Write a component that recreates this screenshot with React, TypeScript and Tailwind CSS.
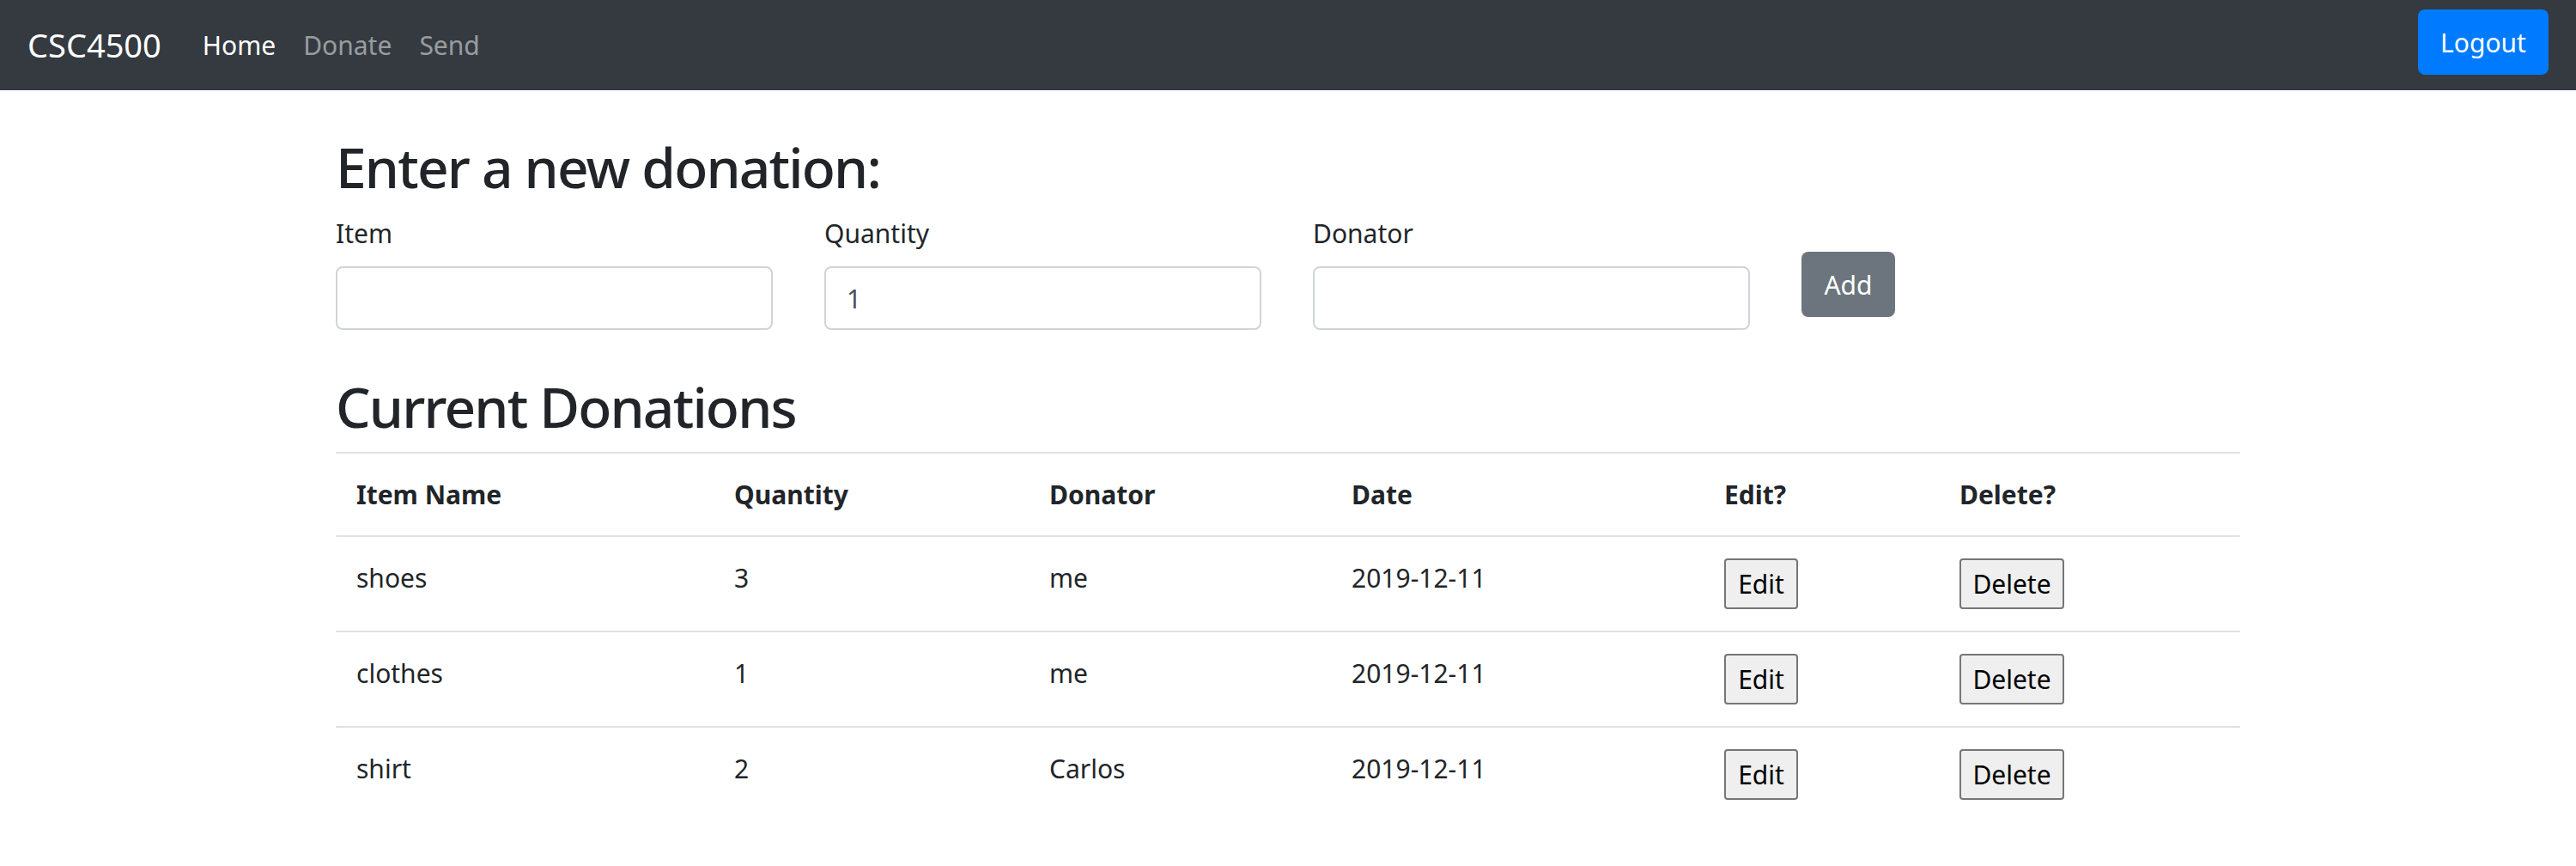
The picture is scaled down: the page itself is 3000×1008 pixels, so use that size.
const donations = [
  { item: "shoes", qty: 3, donator: "me", date: "2019-12-11" },
  { item: "clothes", qty: 1, donator: "me", date: "2019-12-11" },
  { item: "shirt", qty: 2, donator: "Carlos", date: "2019-12-11" },
];

const columns = [
  { label: "Item Name", width: "w-[440px]" },
  { label: "Quantity", width: "w-[367px]" },
  { label: "Donator", width: "w-[352px]" },
  { label: "Date", width: "w-[434px]" },
  { label: "Edit?", width: "w-[274px]" },
  { label: "Delete?", width: "w-[351px]" },
];

const cell = "border-t-2 border-[#dee2e6] px-[24px] pt-[25px] pb-[25px] align-top leading-[45px]";

const Navbar = () => {
  return (
    <nav className="flex h-[105px] justify-between bg-[#343a40] px-[32px]">
      <div className="flex items-center">
        <span className="mr-[32px] text-[38px] leading-[57px] text-white">CSC4500</span>
        <a className="px-[16px] text-[30px] leading-[45px] text-white">Home</a>
        <a className="px-[16px] text-[30px] leading-[45px] text-white/50">Donate</a>
        <a className="px-[16px] text-[30px] leading-[45px] text-white/50">Send</a>
      </div>
      <button className="mt-[11px] h-[76px] w-[152px] rounded-[8px] bg-[#007bff] text-[30px] text-white">
        Logout
      </button>
    </nav>
  );
};

const Field = ({ label, value }: { label: string; value?: string }) => {
  return (
    <div className="w-[509px]">
      <label className="mb-[16px] block text-[30px] leading-[45px]">{label}</label>
      <input
        type="text"
        className="block h-[74px] w-full rounded-[8px] border-2 border-[#ced4da] bg-white px-[24px] text-[30px] text-[#495057] outline-none"
        defaultValue={value}
      />
    </div>
  );
};

const App = () => {
  return (
    <div className="min-h-screen bg-white font-['Noto_Sans',sans-serif] text-[#212529]">
      <Navbar />

      <div className="mx-auto w-[2218px]">
        <h1 className="mt-[51px] mb-[16px] text-[64px] font-medium leading-[77px] tracking-[-1.8px]">
          Enter a new donation:
        </h1>

        <div className="flex gap-x-[60px]">
          <Field label="Item" />
          <Field label="Quantity" value="1" />
          <Field label="Donator" />
          <div className="pt-[44px]">
            <button className="h-[76px] w-[109px] rounded-[8px] bg-[#6c757d] text-[30px] text-white">Add</button>
          </div>
        </div>

        <h1 className="mt-[51px] mb-[14px] text-[64px] font-medium leading-[77px] tracking-[-1.8px]">
          Current Donations
        </h1>

        <table className="w-full table-fixed border-collapse text-left text-[30px]">
          <thead>
            <tr>
              {columns.map((c) => (
                <th key={c.label} className={`${c.width} ${cell} font-bold`}>
                  {c.label}
                </th>
              ))}
            </tr>
          </thead>
          <tbody>
            {donations.map((d) => (
              <tr key={d.item}>
                <td className={cell}>{d.item}</td>
                <td className={cell}>{d.qty}</td>
                <td className={cell}>{d.donator}</td>
                <td className={cell}>{d.date}</td>
                <td className={cell}>
                  <button className="block h-[59px] w-[86px] rounded-[4px] border-2 border-[#767676] bg-[#efefef] text-[30px] leading-[45px] text-black">
                    Edit
                  </button>
                </td>
                <td className={cell}>
                  <button className="block h-[59px] w-[122px] rounded-[4px] border-2 border-[#767676] bg-[#efefef] text-[30px] leading-[45px] text-black">
                    Delete
                  </button>
                </td>
              </tr>
            ))}
          </tbody>
        </table>
      </div>
    </div>
  );
};

export default App;
